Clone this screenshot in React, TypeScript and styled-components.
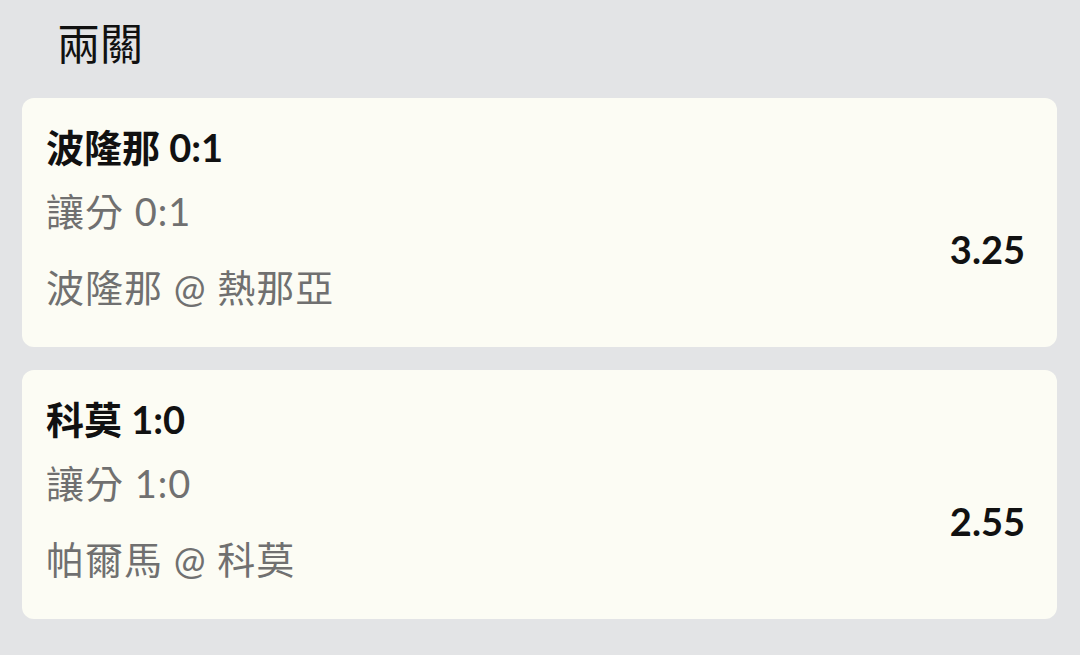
import React from "react";
import styled, { createGlobalStyle } from "styled-components";

const Global = createGlobalStyle`
  html, body { margin: 0; padding: 0; background: #e3e4e6; }
  body { font-family: Lato, "Noto Sans CJK TC", sans-serif; }
`;

const Page = styled.div`
  width: 1080px;
  height: 655px;
  box-sizing: border-box;
  padding: 16px 23px 0 22px;
  background: #e3e4e6;
  display: flex;
  flex-direction: column;
`;

const Heading = styled.h1`
  margin: 0 0 26px 35px;
  font-family: Lato, "Noto Sans CJK TC", sans-serif;
  font-size: 43px;
  font-weight: 400;
  line-height: 56px;
  color: #111;
`;

const List = styled.div`
  display: flex;
  flex-direction: column;
  gap: 23px;
`;

const Card = styled.div`
  background: #fcfcf4;
  border-radius: 12px;
  padding: 25px 32px 36px 24px;
  display: flex;
  flex-direction: column;
  gap: 16px;
`;

const Title = styled.div`
  font-size: 38px;
  font-weight: 700;
  line-height: 48px;
  color: #111;
`;

const Body = styled.div`
  display: flex;
  align-items: center;
  justify-content: space-between;
`;

const Lines = styled.div`
  display: flex;
  flex-direction: column;
  gap: 28px;
`;

const Sub = styled.div`
  font-size: 38px;
  font-weight: 400;
  letter-spacing: 1px;
  line-height: 48px;
  color: #707070;
`;

const Odds = styled.div`
  font-size: 38px;
  font-weight: 700;
  color: #111;
`;

const bets = [
  { title: "波隆那 0:1", market: "讓分 0:1", match: "波隆那 @ 熱那亞", odds: "3.25" },
  { title: "科莫 1:0", market: "讓分 1:0", match: "帕爾馬 @ 科莫", odds: "2.55" },
];

export default function App() {
  return (
    <Page>
      <Global />
      <Heading>兩關</Heading>
      <List>
        {bets.map((b) => (
          <Card key={b.title}>
            <Title>{b.title}</Title>
            <Body>
              <Lines>
                <Sub>{b.market}</Sub>
                <Sub>{b.match}</Sub>
              </Lines>
              <Odds>{b.odds}</Odds>
            </Body>
          </Card>
        ))}
      </List>
    </Page>
  );
}
